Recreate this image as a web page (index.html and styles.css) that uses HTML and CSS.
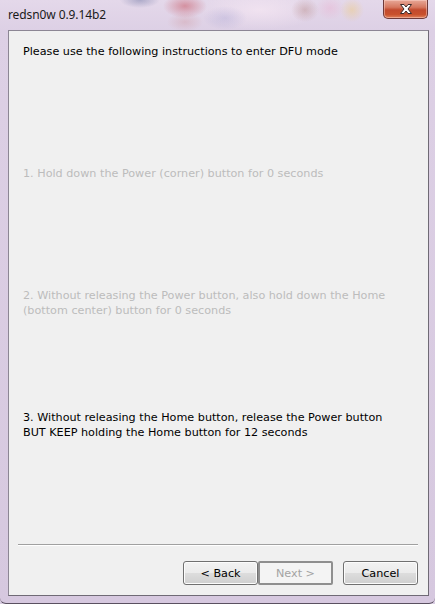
FILE: index.html
```html
<!DOCTYPE html>
<html>
<head>
<meta charset="utf-8">
<link rel="stylesheet" href="styles.css">
</head>
<body>
<div class="window">
  <div class="titlebar">
    <div class="title">redsn0w 0.9.14b2</div>
    <div class="close" aria-label="Close">
      <svg width="22" height="14" viewBox="0 0 22 14">
        <path d="M5.5 2.5 L9 2.5 L11 5 L13 2.5 L16.5 2.5 L13 7 L16.5 11.5 L13 11.5 L11 9 L9 11.5 L5.5 11.5 L9 7 Z" fill="#fff" stroke="#3a2a2a" stroke-width="1" stroke-linejoin="round"/>
      </svg>
    </div>
  </div>
  <div class="client">
    <div class="steps">
      <p class="step">Please use the following instructions to enter DFU mode</p>
      <p class="step disabled">1. Hold down the Power (corner) button for 0 seconds</p>
      <p class="step disabled">2. Without releasing the Power button, also hold down the Home<br>(bottom center) button for 0 seconds</p>
      <p class="step">3. Without releasing the Home button, release the Power button<br>BUT KEEP holding the Home button for 12 seconds</p>
    </div>
    <div class="separator"></div>
    <div class="buttons">
      <button class="btn">&lt; Back</button>
      <button class="btn btn-disabled">Next &gt;</button>
      <button class="btn btn-cancel">Cancel</button>
    </div>
  </div>
</div>
</body>
</html>
```

FILE: styles.css
```css
html, body {
  margin: 0;
  padding: 0;
}
body {
  width: 435px;
  height: 604px;
  overflow: hidden;
  background: #d9cde2;
}
.window {
  width: 435px;
  height: 604px;
  box-sizing: border-box;
  display: flex;
  flex-direction: column;
  border-bottom: 1px solid #5a5060;
  border-radius: 0 0 6px 6px;
  background:
    radial-gradient(ellipse 20px 8px at 140px 0px, rgba(90,100,150,0.4), transparent),
    radial-gradient(ellipse 22px 12px at 185px 6px, rgba(190,40,50,0.4), transparent),
    radial-gradient(ellipse 18px 10px at 185px 22px, rgba(200,120,120,0.25), transparent),
    radial-gradient(ellipse 22px 12px at 225px 18px, rgba(140,140,200,0.25), transparent),
    radial-gradient(ellipse 14px 12px at 305px 10px, rgba(160,100,90,0.3), transparent),
    radial-gradient(ellipse 14px 12px at 330px 8px, rgba(240,150,190,0.25), transparent),
    radial-gradient(ellipse 12px 12px at 352px 10px, rgba(240,200,110,0.4), transparent),
    radial-gradient(ellipse 60px 20px at 260px 10px, rgba(250,235,245,0.6), transparent),
    linear-gradient(180deg, #e4d8ea 0px, #ddd0e5 30px, #d6c8df 100%);
}
.titlebar {
  height: 30px;
  flex: none;
  display: flex;
  justify-content: space-between;
  align-items: flex-start;
  padding: 0 7px 0 8px;
}
.title {
  font-family: "Noto Sans", "Open Sans", sans-serif;
  font-size: 12px;
  color: #1a1a1a;
  line-height: 30px;
  letter-spacing: -0.1px;
}
.close {
  width: 45px;
  height: 19px;
  box-sizing: border-box;
  border: 1px solid #6e3a3a;
  border-top: none;
  border-radius: 0 0 5px 5px;
  background: linear-gradient(180deg, #e8a898 0%, #d67860 40%, #c24a2e 55%, #c8502c 80%, #e0805a 100%);
  display: flex;
  align-items: center;
  justify-content: center;
  box-shadow: inset 0 0 0 1px rgba(255,220,210,0.45);
}
.close svg { display: block; }
.client {
  flex: 1;
  margin: 0 6px 7px 8px;
  box-sizing: border-box;
  background: #f0f0f0;
  border: 1px solid #6f6a75;
  border-top-color: #8c8694;
  border-left-color: #8c8694;
  display: flex;
  flex-direction: column;
  font-family: "DejaVu Sans", Verdana, sans-serif;
  font-size: 11.2px;
}
.steps {
  padding: 14px 0 0 14px;
}
.step {
  margin: 0;
  height: 122px;
  line-height: 14.5px;
  color: #000;
  letter-spacing: 0;
}
.step.disabled {
  color: #bcbcbc;
}
.separator {
  margin: 11px 10px 0 9px;
  height: 0;
  border-top: 1px solid #a0a0a0;
  border-bottom: 1px solid #ffffff;
}
.buttons {
  display: flex;
  justify-content: flex-end;
  padding: 15px 10px 0 0;
}
.btn {
  width: 75px;
  height: 24px;
  box-sizing: border-box;
  font-family: "DejaVu Sans", Verdana, sans-serif;
  font-size: 11.2px;
  color: #000;
  border: 1px solid #707070;
  border-radius: 3px;
  background: linear-gradient(180deg, #f2f2f2 0%, #ebebeb 49%, #dddddd 50%, #cfcfcf 100%);
  box-shadow: inset 0 0 0 1px #fcfcfc;
  padding: 0;
  margin: 0;
}
.btn-disabled {
  color: #a3a3a3;
  background: #f4f4f4;
  border: 2px solid #8f8f8f;
  box-shadow: none;
  border-radius: 2px;
}
.btn-cancel {
  margin-left: 10px;
}
```
